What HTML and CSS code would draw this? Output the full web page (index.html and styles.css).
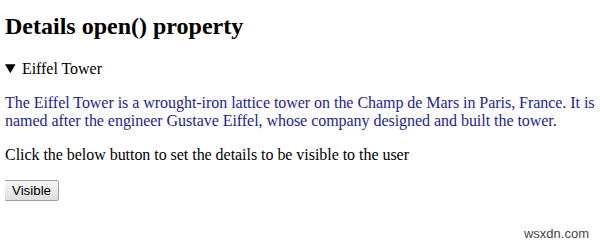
FILE: index.html
```html
<!DOCTYPE html>
<html lang="en">
<head>
    <meta charset="UTF-8">
    <title>Details open() property</title>
    <link rel="stylesheet" href="styles.css">
</head>
<body>

    <h2>Details open() property</h2>

    <!-- 详情区域 -->
    <details id="details" open>
        <summary>Eiffel Tower</summary>
        <p class="info">The Eiffel Tower is a wrought-iron lattice tower on the Champ de Mars in Paris, France. It is named after the engineer Gustave Eiffel, whose company designed and built the tower.</p>
    </details>

    <p>Click the below button to set the details to be visible to the user</p>

    <button class="visible-button" onclick="showDetails()">Visible</button>

    <div class="watermark">wsxdn.com</div>

    <script>
        function showDetails() {
            document.getElementById("details").open = true;
        }
    </script>

</body>
</html>
```

FILE: styles.css
```css
/* 页面基础样式 */
body {
    margin: 0 4px 0 5px;
    font-family: "Liberation Serif", "Times New Roman", serif;
    font-size: 16px;
    letter-spacing: -0.04px;
    color: #000;
    background: #fff;
}

h2 {
    font-size: 24px;
    margin: 13px 0 20px;
    letter-spacing: 0;
}

summary {
    cursor: pointer;
}

.info {
    color: #1c1c9c;
}

/* 按钮样式 */
.visible-button {
    font-family: Arial, "Liberation Sans", sans-serif;
    font-size: 13.33px;
    letter-spacing: 0;
    padding: 2px 7px;
    margin-left: -1px;
    border: 1px solid #a0a0a0;
    border-radius: 2px;
    background: linear-gradient(#f6f6f6, #dedede);
    color: #000;
}

.watermark {
    position: absolute;
    right: 11px;
    bottom: 6px;
    font-family: "Liberation Sans", Arial, sans-serif;
    font-size: 13px;
    letter-spacing: 0;
    color: #444;
}
```
